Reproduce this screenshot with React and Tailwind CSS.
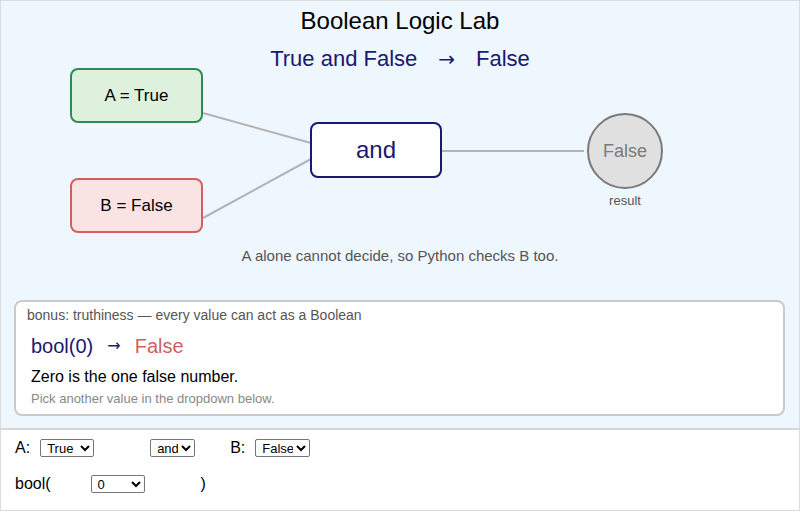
import React from 'react';

const Node = ({ className, children }) => (
  <div
    className={`absolute flex items-center justify-center rounded-[8px] border-2 ${className}`}
  >
    {children}
  </div>
);

const App = () => {
  return (
    <div className="w-[800px] h-[511px] border border-[#dcdcdc] bg-white font-['Liberation_Sans',Arial,sans-serif] text-black overflow-hidden">
      <div className="h-[429px] bg-[#eef6fe] border-b-2 border-[#d6d6d6]">
        <h1 className="pt-[7px] text-center text-[24px] leading-[26px]">Boolean Logic Lab</h1>
        <div className="mt-[13px] flex justify-center text-[22px] leading-[24px] text-[#191970]">
          <span>True and False</span>
          <span className="mx-[21px] font-['DejaVu_Sans',sans-serif] text-[20px]">→</span>
          <span>False</span>
        </div>

        <div className="relative mt-[-4px] h-[172px]">
          <svg className="absolute left-0 top-0" width="798" height="172">
            <line x1="202" y1="46" x2="310" y2="76" stroke="#b3b3b3" strokeWidth="2" />
            <line x1="202" y1="151" x2="310" y2="92" stroke="#b3b3b3" strokeWidth="2" />
            <line x1="441" y1="84" x2="583" y2="84" stroke="#b3b3b3" strokeWidth="2" />
          </svg>
          <Node className="left-[69px] top-[1px] w-[133px] h-[55px] border-[#2e8b57] bg-[#ddf1dd] text-[17px]">
            A = True
          </Node>
          <Node className="left-[69px] top-[111px] w-[133px] h-[55px] border-[#d35f5f] bg-[#fae3e3] text-[17px]">
            B = False
          </Node>
          <Node className="left-[309px] top-[55px] w-[132px] h-[56px] border-[#191970] bg-white text-[24px] text-[#191970]">
            and
          </Node>
          <div className="absolute left-[586px] top-[46px] w-[76px] h-[76px] rounded-full border-2 border-[#7a7a7a] bg-[#e0e0e0] flex items-center justify-center text-[18px] text-[#7a7a7a]">
            False
          </div>
          <div className="absolute left-[584px] top-[127px] w-[80px] text-center text-[13px] leading-[14px] text-[#555]">
            result
          </div>
        </div>

        <p className="mt-[7px] text-center text-[15px] leading-[20px] text-[#555]">
          A alone cannot decide, so Python checks B too.
        </p>

        <div className="mt-[34px] ml-[13px] mr-[14px] h-[116px] rounded-[8px] border-2 border-[#cacaca] bg-white px-[11px] pt-[5px]">
          <div className="text-[14px] leading-[16px] text-[#555]">
            bonus: truthiness — every value can act as a Boolean
          </div>
          <div className="mt-[11px] flex items-center text-[20px] leading-[24px] pl-[4px]">
            <span className="text-[#191970]">bool(0)</span>
            <span className="mx-[14px] text-[#191970] font-['DejaVu_Sans',sans-serif] text-[16px]">→</span>
            <span className="text-[#d35f5f]">False</span>
          </div>
          <div className="mt-[9px] text-[16px] leading-[20px] pl-[4px]">Zero is the one false number.</div>
          <div className="mt-[4px] text-[13px] leading-[16px] text-[#888] pl-[4px]">
            Pick another value in the dropdown below.
          </div>
        </div>
      </div>

      <div className="px-[14px]">
        <div className="mt-[8px] flex items-center h-[20px] text-[16px]">
          <span>A:</span>
          <select defaultValue="True" className="ml-[10px] w-[54px] h-[18px] border border-[#767676] rounded-[2px] text-[13px] pl-[2px]">
            <option>True</option>
            <option>False</option>
          </select>
          <select defaultValue="and" className="ml-[56px] w-[45px] h-[18px] border border-[#767676] rounded-[2px] text-[13px] pl-[2px]">
            <option>and</option>
            <option>or</option>
          </select>
          <span className="ml-[35px]">B:</span>
          <select defaultValue="False" className="ml-[10px] w-[55px] h-[18px] border border-[#767676] rounded-[2px] text-[13px] pl-[2px]">
            <option>True</option>
            <option>False</option>
          </select>
        </div>
        <div className="mt-[16px] flex items-center h-[20px] text-[16px]">
          <span>bool(</span>
          <select defaultValue="0" className="ml-[40px] w-[54px] h-[18px] border border-[#767676] rounded-[2px] text-[13px] pl-[2px]">
            <option>0</option>
            <option>1</option>
            <option>""</option>
            <option>"hi"</option>
            <option>[]</option>
            <option>None</option>
          </select>
          <span className="ml-[56px]">)</span>
        </div>
      </div>
    </div>
  );
};

export default App;
